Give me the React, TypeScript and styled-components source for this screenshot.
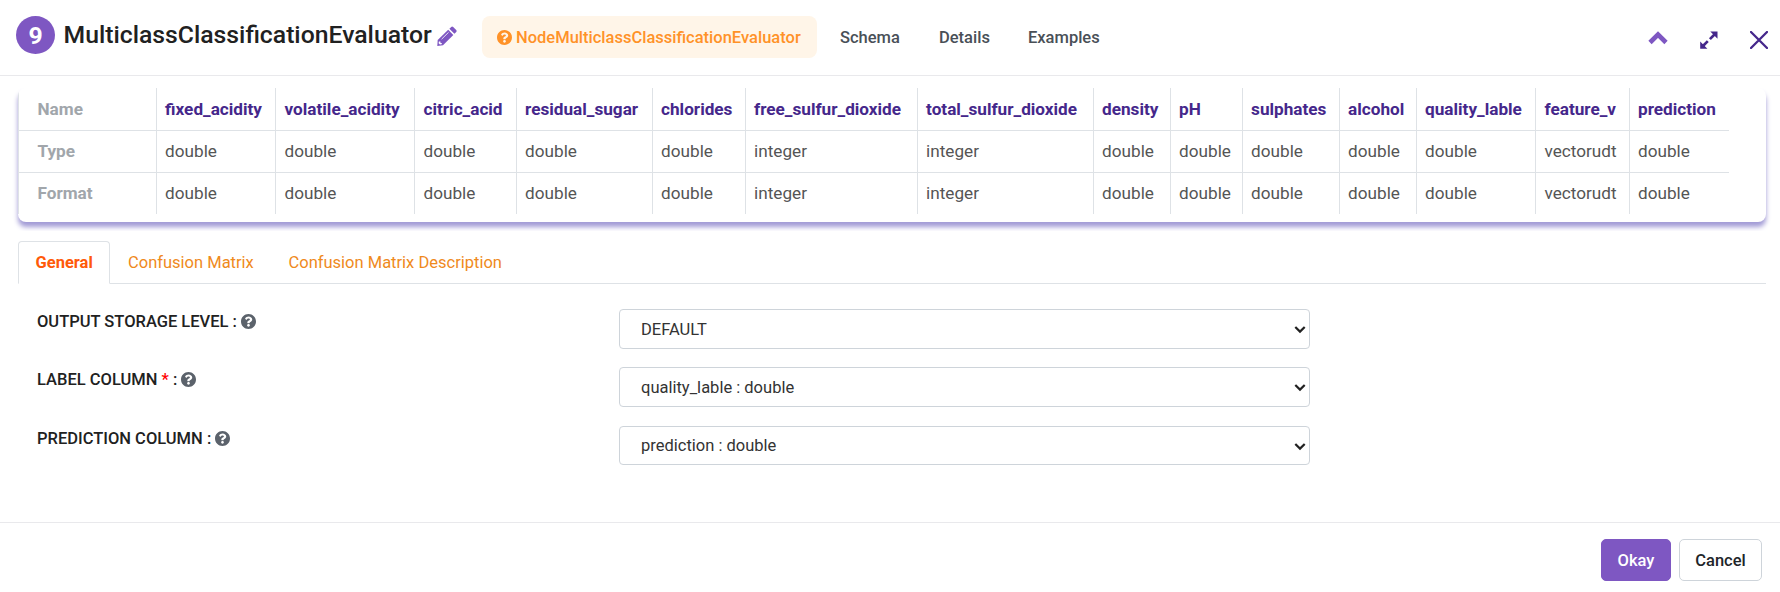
import React from "react";
import styled, { createGlobalStyle, css } from "styled-components";

const Global = createGlobalStyle`
  *, *::before, *::after { box-sizing: border-box; }
  body { margin: 0; background: #fff; font-family: Roboto, "Liberation Sans", sans-serif; font-size: 16px; color: #212121; overflow: hidden; }
`;

const Dialog = styled.div`
  display: flex;
  flex-direction: column;
  width: 1780px;
  height: 592px;
  background: #fff;
`;

const Header = styled.header`
  display: flex;
  align-items: flex-start;
  height: 76px;
  padding: 16px 12px 0 16px;
  border-bottom: 1px solid #e9e9ec;
`;

const NodeBadge = styled.span`
  width: 39px;
  height: 38px;
  border-radius: 50%;
  background: #7e57c2;
  color: #fff;
  font-weight: 700;
  font-size: 24.75px;
  line-height: 39px;
  text-align: center;
`;

const Title = styled.h1`
  width: 369.5px;
  margin: 0 0 0 8.5px;
  font-size: 24.75px;
  font-weight: 500;
  line-height: 37px;
  white-space: nowrap;
`;

const EditIcon = styled.svg`
  width: 20px;
  height: 20px;
  margin: 10px 0 0 4px;
  fill: #7e57c2;
`;

const Nav = styled.nav`
  display: flex;
  margin-left: 25px;
`;

const NavItem = styled.a<{ $width: number; $active?: boolean }>`
  display: flex;
  align-items: center;
  gap: 4px;
  width: ${(p) => p.$width}px;
  height: 42px;
  padding: 0 0 0 15px;
  border-radius: 8px;
  font-size: 16.5px;
  font-weight: 500;
  color: #495057;
  white-space: nowrap;
  margin-right: 8px;
  ${(p) => p.$active && css`background: #fff5e8; color: #ff9228;`}
`;

const HelpIcon = styled.svg`
  flex: none;
  width: 15px;
  height: 15px;
  fill: currentColor;
`;

const Actions = styled.div`
  display: flex;
  gap: 32px;
  margin: 15px 0 0 auto;
`;

const ActionIcon = styled.svg<{ $light?: boolean }>`
  width: ${(p) => (p.$light ? 20 : 18)}px;
  height: 18px;
  color: ${(p) => (p.$light ? "#7e57c2" : "#45278b")};
`;

const Body = styled.main`
  flex: 1;
  padding: 12px 14px 0 18px;
`;

const SchemaClip = styled.div`
  margin: 0 -8px 0 -8px;
  padding: 0 8px 9px;
  overflow: hidden;
`;

const SchemaCard = styled.section`
  height: 134px;
  border-radius: 8px;
  box-shadow: 0 5px 5px #a29bd6;
  overflow: hidden;
`;

const SchemaTable = styled.div`
  display: grid;
  grid-template-columns: 138px 119.45px 139px 101.55px 136px 93px 172px 176px 77px 72px 97px 77px 119.45px 93.55px 100px;
  grid-template-rows: repeat(3, 42px);
  width: 1711px;
`;

const Cell = styled.div<{ $kind: "label" | "name" | "value"; $row: number }>`
  padding: ${(p) => (p.$row ? 10 : 11)}px 0 0 ${(p) => (p.$kind === "label" ? 18.5 : 8.1)}px;
  border-left: 1px solid #dee2e6;
  border-top: ${(p) => (p.$row ? 1 : 0)}px solid #dee2e6;
  font-size: 17.16px;
  line-height: 20px;
  font-weight: ${(p) => (p.$kind === "value" ? 400 : 700)};
  color: ${(p) => ({ label: "#a1a6ab", name: "#45278b", value: "#555" })[p.$kind]};
  white-space: nowrap;
`;

const Tabs = styled.div`
  display: flex;
  height: 43px;
  margin-top: 10px;
  border-bottom: 1px solid #dee2e6;
`;

const Tab = styled.button<{ $width: number; $active?: boolean }>`
  width: ${(p) => p.$width}px;
  height: 43px;
  padding: 0 0 0 ${(p) => (p.$active ? 16.5 : 17)}px;
  border: 1px solid transparent;
  border-radius: 4px 4px 0 0;
  background: none;
  text-align: left;
  font: 400 16.5px/20px Roboto, sans-serif;
  color: #ef8a1c;
  white-space: nowrap;
  ${(p) => p.$active && css`
    background: #fff;
    border-color: #dee2e6 #dee2e6 #fff;
    color: #ff5a09;
    font-weight: 700;
  `}
`;

const Form = styled.form`
  display: grid;
  grid-template-columns: 582px 691px;
  grid-template-rows: 58px 59px 39px;
  margin: 25px 0 0 19px;
`;

const FieldLabel = styled.label`
  display: flex;
  align-items: center;
  gap: 3.6px;
  height: 20px;
  margin-top: 2px;
  font-size: 16.5px;
  font-weight: 500;
  line-height: 19px;
  white-space: pre;
  svg { color: #5b626b; }
`;

const Required = styled.span`
  color: #f00;
`;

const SelectBox = styled.div<{ $height: number }>`
  position: relative;
  height: ${(p) => p.$height}px;
`;

const Select = styled.select`
  appearance: none;
  width: 100%;
  height: 100%;
  padding: 1px 21px 0;
  border: 1px solid #ced4da;
  border-radius: 4px;
  background: #fff;
  color: #333;
  font: 400 16.5px/20px Roboto, sans-serif;
`;

const Caret = styled.svg`
  position: absolute;
  right: 4px;
  top: 16px;
  width: 12px;
  height: 9px;
  pointer-events: none;
`;

const Footer = styled.footer`
  display: flex;
  justify-content: flex-end;
  gap: 8px;
  height: 70px;
  padding: 16px 18px 0;
  border-top: 1px solid #e9e9ec;
`;

const Button = styled.button<{ $primary?: boolean }>`
  width: ${(p) => (p.$primary ? 70 : 83)}px;
  height: 42px;
  padding: 1px 0 0;
  border: 1px solid ${(p) => (p.$primary ? "#7e57c2" : "#ced4da")};
  border-radius: 5px;
  background: ${(p) => (p.$primary ? "#7e57c2" : "#fff")};
  color: ${(p) => (p.$primary ? "#fff" : "#212529")};
  font: 500 16.5px/20px Roboto, sans-serif;
`;

const Help = () => (
  <HelpIcon viewBox="8 8 496 496">
    <path d="M504 256c0 136.997-111.043 248-248 248S8 392.997 8 256C8 119.083 119.043 8 256 8s248 111.083 248 248zM262.655 90c-54.497 0-89.255 22.957-116.549 63.758-3.536 5.286-2.353 12.415 2.715 16.258l34.699 26.31c5.205 3.947 12.621 3.008 16.665-2.122 17.864-22.658 30.113-35.797 57.303-35.797 20.429 0 45.698 13.148 45.698 32.958 0 14.976-12.363 22.667-32.534 33.976C247.128 238.528 216 254.941 216 296v4c0 6.627 5.373 12 12 12h56c6.627 0 12-5.373 12-12v-1.333c0-28.462 83.186-29.647 83.186-106.667 0-58.002-60.165-102-116.531-102zM256 338c-25.365 0-46 20.635-46 46 0 25.364 20.635 46 46 46s46-20.636 46-46c0-25.365-20.635-46-46-46z" />
  </HelpIcon>
);

const columns = [
  ["fixed_acidity", "double"],
  ["volatile_acidity", "double"],
  ["citric_acid", "double"],
  ["residual_sugar", "double"],
  ["chlorides", "double"],
  ["free_sulfur_dioxide", "integer"],
  ["total_sulfur_dioxide", "integer"],
  ["density", "double"],
  ["pH", "double"],
  ["sulphates", "double"],
  ["alcohol", "double"],
  ["quality_lable", "double"],
  ["feature_v", "vectorudt"],
  ["prediction", "double"],
];

const fields = [
  { label: "OUTPUT STORAGE LEVEL", value: "DEFAULT", height: 40 },
  { label: "LABEL COLUMN", value: "quality_lable : double", required: true, height: 40 },
  { label: "PREDICTION COLUMN", value: "prediction : double", height: 39 },
];

export default function App() {
  return (
    <>
      <Global />
      <Dialog>
        <Header>
          <NodeBadge>9</NodeBadge>
          <Title>MulticlassClassificationEvaluator</Title>
          <EditIcon viewBox="0 0 20 20">
            <path d="M0.3 20L0.7 14L11.2 3.8L16.3 8.9L6 19.3Z" />
            <path d="M12.4 2.7L14.2 0.9Q15.2 0 16.2 0.9L19.2 3.9Q20.1 4.9 19.2 5.9L17.4 7.7Z" />
            <path d="M4.6 13.2L11.6 6.3" stroke="#fff" strokeWidth="0.8" />
            <path d="M1.9 15.6L3.4 15.5L3.5 16.9L4.9 17L4.6 18.2L2.9 18.5L1.6 17.3Z" fill="#fff" />
          </EditIcon>
          <Nav>
            <NavItem $active $width={335}><Help />NodeMulticlassClassificationEvaluator</NavItem>
            <NavItem $width={91}>Schema</NavItem>
            <NavItem $width={81}>Details</NavItem>
            <NavItem $width={102}>Examples</NavItem>
          </Nav>
          <Actions>
            <ActionIcon $light viewBox="0 0 20 18">
              <path d="M2 11.5L10 3.5L18 11.5" fill="none" stroke="currentColor" strokeWidth="4.6" />
            </ActionIcon>
            <ActionIcon viewBox="0 0 18 18">
              <path d="M10.3 0.5H17.5V7.7ZM0.2 10.5V17.7H7.4Z" fill="currentColor" />
              <path d="M15 3L9.9 8.1M2.7 15.2L7.8 10.1" fill="none" stroke="currentColor" strokeWidth="2.7" />
            </ActionIcon>
            <ActionIcon viewBox="0 0 18 18">
              <path d="M1 1L17 17M17 1L1 17" fill="none" stroke="currentColor" strokeWidth="2.3" strokeLinecap="round" />
            </ActionIcon>
          </Actions>
        </Header>
        <Body>
          <SchemaClip>
            <SchemaCard>
              <SchemaTable>
                {["Name", "Type", "Format"].map((heading, row) => (
                  <React.Fragment key={heading}>
                    <Cell $kind="label" $row={row}>{heading}</Cell>
                    {columns.map(([name, type]) => (
                      <Cell key={name} $kind={row ? "value" : "name"} $row={row}>{row ? type : name}</Cell>
                    ))}
                  </React.Fragment>
                ))}
              </SchemaTable>
            </SchemaCard>
          </SchemaClip>
          <Tabs>
            <Tab $active $width={92}>General</Tab>
            <Tab $width={160.5}>Confusion Matrix</Tab>
            <Tab $width={248}>Confusion Matrix Description</Tab>
          </Tabs>
          <Form>
            {fields.map((f) => (
              <React.Fragment key={f.label}>
                <FieldLabel>
                  <span>{f.label} {f.required && <><Required>*</Required> </>}:</span>
                  <Help />
                </FieldLabel>
                <SelectBox $height={f.height}>
                  <Select defaultValue={f.value}><option>{f.value}</option></Select>
                  <Caret viewBox="0 0 12 9">
                    <path d="M1.3 2L6 6.6L10.7 2" fill="none" stroke="#212121" strokeWidth="2.2" />
                  </Caret>
                </SelectBox>
              </React.Fragment>
            ))}
          </Form>
        </Body>
        <Footer>
          <Button $primary>Okay</Button>
          <Button>Cancel</Button>
        </Footer>
      </Dialog>
    </>
  );
}
